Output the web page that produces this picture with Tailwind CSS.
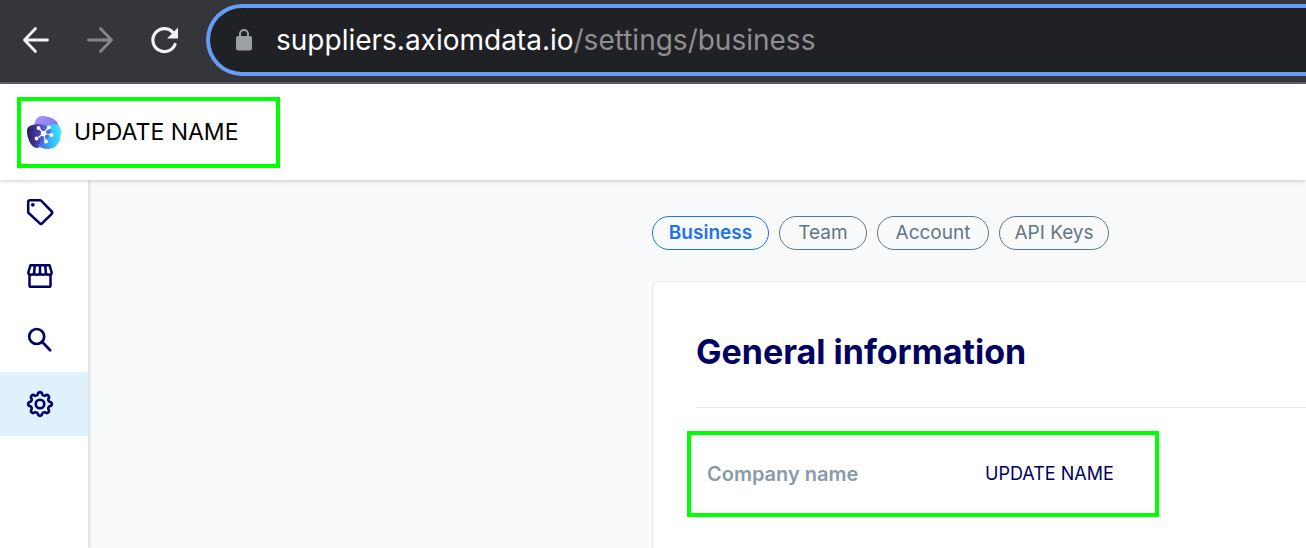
<!DOCTYPE html>
<html lang="en">
<head>
  <meta charset="UTF-8">
  <meta name="viewport" content="width=device-width, initial-scale=1.0">
  <title>Business settings</title>
  <script src="https://cdn.jsdelivr.net/npm/@tailwindcss/browser@4"></script>
</head>
<body class="flex h-screen flex-col overflow-hidden bg-white font-['Inter',sans-serif]">

  <!-- Browser bar -->
  <div class="flex h-[84px] shrink-0 items-center border-b-2 border-[#5f6063] bg-[#35363a] pb-[2px]">
    <div class="flex w-[206px] shrink-0 items-center gap-6 pl-4">
      <button aria-label="Back" class="text-[#f1f3f4]">
        <svg class="size-10" viewBox="0 0 40 40" fill="none" stroke="currentColor" stroke-width="2.800" stroke-linecap="round" stroke-linejoin="round"><path d="M31.500 20H8.500M19.500 8.500L8.500 20l11 11.500"/></svg>
      </button>
      <button aria-label="Forward" class="text-[#86878a]">
        <svg class="size-10" viewBox="0 0 40 40" fill="none" stroke="currentColor" stroke-width="2.800" stroke-linecap="round" stroke-linejoin="round"><path d="M8.500 20h23M20.500 8.500l11 11.500-11 11.500"/></svg>
      </button>
      <button aria-label="Reload" class="text-[#f1f3f4]">
        <svg class="size-10" viewBox="0 0 40 40"><path fill="none" stroke="currentColor" stroke-width="3.200" stroke-linecap="round" d="M31 24.500A11.500 11.500 0 1 1 29 12.500"/><path fill="currentColor" d="M34 7.500v11H23z"/></svg>
      </button>
    </div>
    <div class="flex h-[72px] grow items-center gap-[22px] rounded-l-full border-4 border-r-0 border-[#669df6] bg-[#202124] pl-6">
      <svg class="h-[22px] w-5 shrink-0 text-[#9aa0a6]" viewBox="0 0 20 22"><rect x="2" y="7" width="16" height="14.500" rx="2" fill="currentColor"/><path d="M6 8V5a4 4 0 0 1 8 0v3" fill="none" stroke="currentColor" stroke-width="2"/></svg>
      <p class="text-[28px] leading-9 whitespace-nowrap text-[#8e8f92]"><span class="text-white">suppliers.axiomdata.io</span>/settings/business</p>
    </div>
  </div>

  <!-- App header -->
  <header class="relative z-10 flex h-24 shrink-0 items-center bg-white pl-[17px] shadow-[0_1px_4px_rgba(0,0,0,0.2)]">
    <div class="flex h-[71px] w-[263px] items-center gap-3 border-4 border-[#00ff00] pl-[5px]">
      <svg class="size-9" viewBox="0 0 36 36">
        <defs>
          <linearGradient id="top" x1="0" y1="0" x2="1" y2="1"><stop offset="0" stop-color="#a99bf5"/><stop offset="1" stop-color="#7166e0"/></linearGradient>
          <linearGradient id="left" x1="0" y1="0.500" x2="1" y2="0.500"><stop offset="0" stop-color="#231d63"/><stop offset="0.500" stop-color="#4a42ad"/><stop offset="1" stop-color="#8a86f0"/></linearGradient>
          <linearGradient id="right" x1="0" y1="0.600" x2="1" y2="0.400"><stop offset="0" stop-color="#4269e8"/><stop offset="0.550" stop-color="#35b8fb"/><stop offset="1" stop-color="#3aeaff"/></linearGradient>
        </defs>
        <path fill="url(#top)" d="M8 12C9 5 12 2 16 2c5 0 9 1 13 4 4 3 4 8 2 13l-13 5-10-5z"/>
        <path fill="url(#left)" d="M1 17c0-4 3-6 8-6.500 6-.5 11 .5 14 2.500 3 2 3 5 0 9l-7 9c-3 4-7 3.500-10 .5C3 28 1 22 1 17z"/>
        <path fill="url(#right)" d="M20 12c5-2 10-2.500 13 0 3 3 2 8 1 13-1.500 6-6 10-12 10-5 0-9-2-11-4 4-1 6-5 9-8z"/>
        <path fill="#4b62da" opacity=".75" d="M19 12c2 0 5 1.500 6 3 1 2-1 5-3 8-2 3-5 7-7 8-2-5 0-14 4-19z"/>
        <g stroke="#fff" stroke-width="1.200" fill="#fff"><path d="M17.500 19.500L13 14M17.500 19.500l5-6M17.500 19.500l8 1.500M17.500 19.500L11 24.500M17.500 19.500l2 7.500"/><circle cx="17.500" cy="19.500" r="2"/><circle cx="12.500" cy="14" r="1.300"/><circle cx="23" cy="13.500" r="1.300"/><circle cx="25.500" cy="21" r="1.300"/><circle cx="10.500" cy="24.500" r="1.300"/><circle cx="20" cy="27.500" r="1.300"/></g>
      </svg>
      <span class="text-[23px] leading-8 text-black">UPDATE NAME</span>
    </div>
  </header>

  <div class="flex min-h-0 grow">
    <!-- Side navigation -->
    <nav class="relative w-[88px] shrink-0 bg-white text-[#000066] shadow-[1px_0_4px_rgba(0,0,0,0.16)]">
      <a href="#" aria-label="Tags" class="flex h-16 items-center pl-6">
        <svg class="size-8" viewBox="0 0 32 32" fill="none" stroke="currentColor" stroke-width="2.500" stroke-linejoin="round"><path d="M4.200 6c0-1 .8-1.800 1.800-1.800h9.800c.5 0 1 .2 1.300.5l10.600 10.800c.7.700.7 1.600 0 2.300l-9.600 9.600c-.7.700-1.600.7-2.300 0L4.700 17c-.3-.3-.5-.8-.5-1.300z"/><circle cx="8.800" cy="8.800" r="1.900" fill="currentColor" stroke="none"/></svg>
      </a>
      <a href="#" aria-label="Store" class="flex h-16 items-center pl-6">
        <svg class="size-8" viewBox="0 0 32 32" fill="none" stroke="currentColor" stroke-width="2.500" stroke-linejoin="round"><path d="M5.500 14v11.500c0 .8.500 1.300 1.300 1.300h18.400c.8 0 1.300-.5 1.300-1.300V14"/><path d="M6.500 5.200h19l2.200 7.300c0 1.500-1.300 2.300-2.900 2.300s-2.900-.9-2.900-2.300c0 1.400-1.300 2.300-2.900 2.300s-3-.9-3-2.300c0 1.400-1.400 2.300-3 2.300s-2.900-.9-2.900-2.300c0 1.400-1.300 2.300-2.900 2.300s-2.900-.8-2.900-2.300z"/><path d="M10.900 5.200l-.8 7.300M16 5.200v7.300M21.100 5.200l.8 7.300"/></svg>
      </a>
      <a href="#" aria-label="Search" class="flex h-16 items-center pl-6">
        <svg class="size-8" viewBox="0 0 32 32" fill="none" stroke="currentColor" stroke-width="2.700" stroke-linecap="round"><circle cx="12.700" cy="12.500" r="7.500"/><path d="M18.200 18l8 8.200"/></svg>
      </a>
      <a href="#" aria-label="Settings" aria-current="page" class="flex h-16 items-center bg-[#e0f1fe] pl-6">
        <svg class="size-8" viewBox="0 0 32 32" fill="none" stroke="currentColor" stroke-width="2.600" stroke-linejoin="round"><circle cx="16" cy="16" r="4.300"/><path d="M13.700 6.600C14.200 3.300 17.800 3.300 18.300 6.600Q19.300 8.100 21 7.700C23.700 5.700 26.300 8.300 24.300 11Q23.900 12.700 25.400 13.700C28.700 14.200 28.700 17.800 25.400 18.300Q23.900 19.300 24.300 21C26.300 23.700 23.700 26.300 21 24.300Q19.300 23.900 18.300 25.400C17.800 28.700 14.200 28.700 13.700 25.400Q12.700 23.900 11 24.300C8.300 26.300 5.700 23.700 7.700 21Q8.100 19.300 6.600 18.300C3.300 17.800 3.300 14.200 6.600 13.700Q8.100 12.700 7.700 11C5.700 8.300 8.300 5.700 11 7.700Q12.700 8.100 13.700 6.600z"/></svg>
      </a>
    </nav>

    <main class="flex grow flex-col bg-[#f9fafc] pt-9 pl-[564px]">
      <div class="flex gap-[10px] text-[19px] leading-6 whitespace-nowrap text-[#637684]">
        <button class="h-[34px] w-[117px] rounded-full border border-[#1f73f1] font-semibold text-[#1f73f1]">Business</button>
        <button class="h-[34px] w-[88px] rounded-full border border-[#637684]">Team</button>
        <button class="h-[34px] w-[112px] rounded-full border border-[#637684]">Account</button>
        <button class="h-[34px] w-[110px] rounded-full border border-[#637684]">API Keys</button>
      </div>

      <!-- General information -->
      <section class="mt-[31px] grow rounded-tl-md border-t border-l border-[#e4e6ea] bg-white pt-12 pl-[34px]">
        <h1 class="ml-[9px] text-[34px] leading-[44px] font-bold text-[#000060]">General information</h1>
        <hr class="mt-[33px] ml-[9px] border-[#e6e6e6]">
        <dl class="mt-[23px] flex h-[86px] w-[472px] items-center border-4 border-[#00ff00] pl-4 leading-6">
          <dt class="w-[278px] text-[20px] font-semibold text-[#8a9ba8]">Company name</dt>
          <dd class="text-[18px] text-[#000060]">UPDATE NAME</dd>
        </dl>
      </section>
    </main>
  </div>

</body>
</html>
